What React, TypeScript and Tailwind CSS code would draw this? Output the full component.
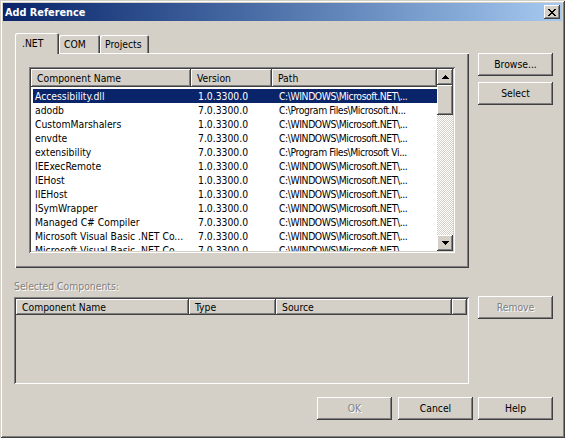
import React from "react";

const raised = "shadow-[inset_-1px_-1px_0_#404040,inset_1px_1px_0_#fff,inset_-2px_-2px_0_#808080]";
const sunken = "shadow-[inset_1px_1px_0_#808080,inset_-1px_-1px_0_#fff,inset_2px_2px_0_#404040,inset_-2px_-2px_0_#d4d0c8]";
const disabledText = "text-[#808080] [text-shadow:1px_1px_0_#fff]";

const rows: [string, string, string][] = [
  ["Accessibility.dll", "1.0.3300.0", "C:\\WINDOWS\\Microsoft.NET\\..."],
  ["adodb", "7.0.3300.0", "C:\\Program Files\\Microsoft.N..."],
  ["CustomMarshalers", "1.0.3300.0", "C:\\WINDOWS\\Microsoft.NET\\..."],
  ["envdte", "7.0.3300.0", "C:\\WINDOWS\\Microsoft.NET\\..."],
  ["extensibility", "7.0.3300.0", "C:\\Program Files\\Microsoft Vi..."],
  ["IEExecRemote", "1.0.3300.0", "C:\\WINDOWS\\Microsoft.NET\\..."],
  ["IEHost", "1.0.3300.0", "C:\\WINDOWS\\Microsoft.NET\\..."],
  ["IIEHost", "1.0.3300.0", "C:\\WINDOWS\\Microsoft.NET\\..."],
  ["ISymWrapper", "1.0.3300.0", "C:\\WINDOWS\\Microsoft.NET\\..."],
  ["Managed C# Compiler", "7.0.3300.0", "C:\\WINDOWS\\Microsoft.NET\\..."],
  ["Microsoft Visual Basic .NET Co...", "7.0.3300.0", "C:\\WINDOWS\\Microsoft.NET\\..."],
  ["Microsoft Visual Basic .NET Co...", "7.0.3300.0", "C:\\WINDOWS\\Microsoft.NET\\..."],
];

function CloseGlyph() {
  return (
    <svg width="8" height="7" viewBox="0 0 8 7" shapeRendering="crispEdges">
      <path
        fill="#000"
        d="M0 0h2v1h-2zM6 0h2v1h-2zM1 1h2v1h-2zM5 1h2v1h-2zM2 2h4v1h-4zM3 3h2v1h-2zM2 4h4v1h-4zM1 5h2v1h-2zM5 5h2v1h-2zM0 6h2v1h-2zM6 6h2v1h-2z"
      />
    </svg>
  );
}

function Arrow({ down }: { down?: boolean }) {
  return (
    <svg width="7" height="4" viewBox="0 0 7 4" shapeRendering="crispEdges" className={down ? "rotate-180" : ""}>
      <path fill="#000" d="M3 0h1v1h-1zM2 1h3v1h-3zM1 2h5v1h-5zM0 3h7v1h-7z" />
    </svg>
  );
}

function Button({ children, disabled, className = "" }: { children: React.ReactNode; disabled?: boolean; className?: string }) {
  return (
    <div className={`w-[75px] h-[23px] flex items-center justify-center bg-[#d4d0c8] ${raised} ${disabled ? disabledText : "text-black"} ${className}`}>
      {children}
    </div>
  );
}

function HeaderCell({ children, className = "" }: { children?: React.ReactNode; className?: string }) {
  return (
    <div className={`h-full shrink-0 flex items-center pl-[6px] whitespace-nowrap overflow-hidden bg-[#d4d0c8] ${raised} ${className}`}>
      {children}
    </div>
  );
}

function Scrollbar() {
  return (
    <div className="w-[16px] h-full flex flex-col shrink-0">
      <div className={`h-[16px] flex items-center justify-center bg-[#d4d0c8] ${raised}`}>
        <Arrow />
      </div>
      <div className={`h-[30px] bg-[#d4d0c8] ${raised}`} />
      <div className="flex-1 bg-[image:repeating-conic-gradient(#d4d0c8_0_25%,#fff_0_50%)] bg-[length:2px_2px]" />
      <div className={`h-[16px] flex items-center justify-center bg-[#d4d0c8] ${raised}`}>
        <Arrow down />
      </div>
    </div>
  );
}

export default function App() {
  return (
    <div className="w-[565px] h-[438px] bg-[#d4d0c8] p-[3px] flex flex-col overflow-hidden font-['DejaVu_Sans_Condensed','Liberation_Sans',sans-serif] text-[10.3px] leading-[13px] text-black shadow-[inset_1px_1px_0_#d4d0c8,inset_-1px_-1px_0_#404040,inset_2px_2px_0_#fff,inset_-2px_-2px_0_#808080]">
      {/* caption */}
      <div className="h-[18px] shrink-0 flex items-center justify-between bg-linear-to-r from-[#0a246a] to-[#a6caf0] pl-[2px] pr-[2px]">
        <span className="text-white font-bold text-[10.8px]">Add Reference</span>
        <div className={`w-[16px] h-[14px] flex items-center justify-center bg-[#d4d0c8] ${raised}`}>
          <CloseGlyph />
        </div>
      </div>

      {/* tabs + right buttons */}
      <div className="flex mt-[12px]">
        <div className="ml-[12px] w-[454px] flex flex-col">
          <div className="h-[20px] flex items-end">
            <div className="relative z-10 -mb-px w-[44px] h-[21px] pl-[7px] pt-[4px] bg-[#d4d0c8] rounded-t-[2px] shadow-[inset_1px_1px_0_#fff,inset_-1px_0_0_#404040,inset_-2px_0_0_#808080]">
              .NET
            </div>
            <div className="w-[41px] h-[18px] pl-[5px] pt-[3px] rounded-t-[2px] shadow-[inset_1px_1px_0_#fff,inset_-1px_0_0_#404040,inset_-2px_0_0_#808080]">
              COM
            </div>
            <div className="w-[49px] h-[18px] pl-[5px] pt-[3px] rounded-t-[2px] shadow-[inset_1px_1px_0_#fff,inset_-1px_0_0_#404040,inset_-2px_0_0_#808080]">
              Projects
            </div>
          </div>
          <div className="h-[215px] pl-[14px] pt-[14px] shadow-[inset_1px_1px_0_#fff,inset_-1px_-1px_0_#404040,inset_-2px_-2px_0_#808080]">
            <div className={`w-[426px] h-[186px] p-[2px] bg-white ${sunken}`}>
              <div className="flex h-full">
                <div className="w-[406px] h-full flex flex-col overflow-hidden">
                  <div className="h-[18px] flex shrink-0">
                    <HeaderCell className="w-[160px]">Component Name</HeaderCell>
                    <HeaderCell className="w-[81px]">Version</HeaderCell>
                    <HeaderCell className="w-[165px]">Path</HeaderCell>
                  </div>
                  <div className="pt-[2px] flex flex-col">
                    {rows.map(([name, ver, path], i) => (
                      <div
                        key={i}
                        className={`h-[14px] shrink-0 flex items-center whitespace-nowrap ml-[2px] ${i === 0 ? "bg-[#0a246a] text-white" : ""}`}
                      >
                        <div className="w-[158px] pl-[2px] overflow-hidden">{name}</div>
                        <div className="w-[81px] pl-[7px] overflow-hidden">{ver}</div>
                        <div className="w-[165px] pl-[7px] overflow-hidden tracking-[-0.4px]">{path}</div>
                      </div>
                    ))}
                  </div>
                </div>
                <Scrollbar />
              </div>
            </div>
          </div>
        </div>
        <div className="ml-[9px] pt-[20px] flex flex-col gap-[6px]">
          <Button>Browse...</Button>
          <Button>Select</Button>
        </div>
      </div>

      {/* selected components */}
      <div className={`ml-[11px] mt-[12px] h-[13px] ${disabledText}`}>Selected Components:</div>
      <div className="flex items-start">
        <div className={`ml-[11px] mt-[4px] w-[455px] h-[87px] p-[2px] bg-[#d4d0c8] ${sunken}`}>
          <div className="h-[16px] flex">
            <HeaderCell className="w-[173px]">Component Name</HeaderCell>
            <HeaderCell className="w-[87px]">Type</HeaderCell>
            <HeaderCell className="w-[176px]">Source</HeaderCell>
            <HeaderCell className="flex-1" />
          </div>
        </div>
        <Button disabled className="ml-[9px] mt-[3px]">Remove</Button>
      </div>

      {/* bottom buttons */}
      <div className="flex mt-[13px]">
        <Button disabled className="ml-[314px]">OK</Button>
        <Button className="ml-[6px]">Cancel</Button>
        <Button className="ml-[5px]">Help</Button>
      </div>
    </div>
  );
}
